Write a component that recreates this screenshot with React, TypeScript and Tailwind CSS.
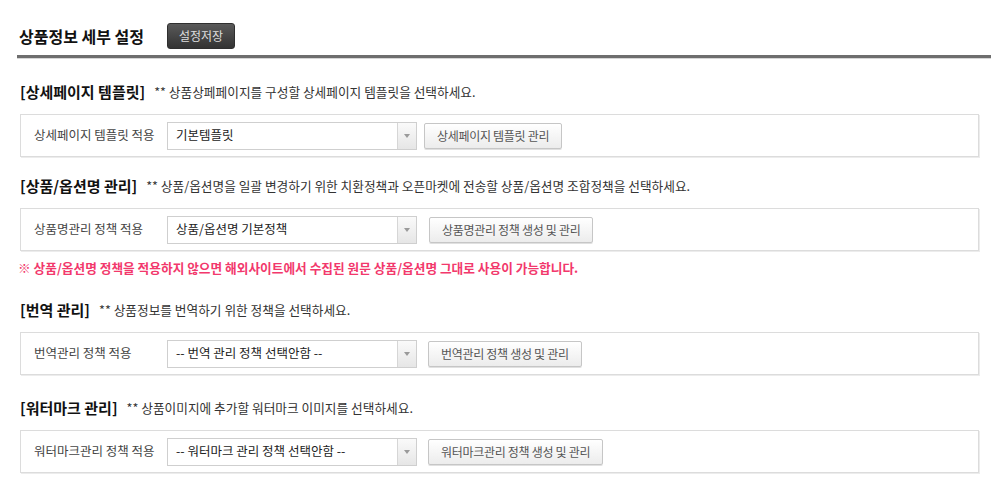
const font = "font-['Noto_Sans_CJK_KR','Noto_Sans',sans-serif]";

type Row = {
  title: string;
  desc: string;
  label: string;
  value: string;
  action: string;
  gap: string;
  top: string;
};

const rows: Row[] = [
  {
    title: "[상세페이지 템플릿]",
    desc: "** 상품상페페이지를 구성할 상세페이지 템플릿을 선택하세요.",
    label: "상세페이지 템플릿 적용",
    value: "기본템플릿",
    action: "상세페이지 템플릿 관리",
    gap: "ml-[7px]",
    top: "mt-[24px]",
  },
  {
    title: "[상품/옵션명 관리]",
    desc: "** 상품/옵션명을 일괄 변경하기 위한 치환정책과 오픈마켓에 전송할 상품/옵션명 조합정책을 선택하세요.",
    label: "상품명관리 정책 적용",
    value: "상품/옵션명 기본정책",
    action: "상품명관리 정책 생성 및 관리",
    gap: "ml-[12px]",
    top: "mt-[19px]",
  },
  {
    title: "[번역 관리]",
    desc: "** 상품정보를 번역하기 위한 정책을 선택하세요.",
    label: "번역관리 정책 적용",
    value: "-- 번역 관리 정책 선택안함 --",
    action: "번역관리 정책 생성 및 관리",
    gap: "ml-[11px]",
    top: "mt-[22px]",
  },
  {
    title: "[워터마크 관리]",
    desc: "** 상품이미지에 추가할 워터마크 이미지를 선택하세요.",
    label: "워터마크관리 정책 적용",
    value: "-- 워터마크 관리 정책 선택안함 --",
    action: "워터마크관리 정책 생성 및 관리",
    gap: "ml-[11px]",
    top: "mt-[23px]",
  },
];

function FakeSelect({ value }: { value: string }) {
  return (
    <div className="flex h-[28px] w-[250px] items-stretch border border-[#cfcfcf] bg-white">
      <div className="flex flex-1 items-center pl-[8px] text-[12.5px] text-[#222]">
        {value}
      </div>
      <div className="flex w-[19px] items-center justify-center border-l border-[#d6d6d6] bg-gradient-to-b from-[#fafafa] to-[#e6e6e6]">
        <span className="block h-0 w-0 border-x-[3px] border-t-[4px] border-x-transparent border-t-[#9a9a9a]" />
      </div>
    </div>
  );
}

function Section({ row, children }: { row: Row; children?: React.ReactNode }) {
  return (
    <div className={row.top}>
      <div className="flex h-[20px] items-center">
        <span className="text-[15px] font-bold text-[#111]">{row.title}</span>
        <span className="ml-[9px] text-[12.7px] text-[#333]">{row.desc}</span>
      </div>
      <div className="mt-[12px] flex h-[43px] items-center border border-[#dcdcdc] pl-[13px] shadow-[1px_1px_0_#ececec]">
        <div className="w-[133px] text-[12.5px] text-[#444]">{row.label}</div>
        <FakeSelect value={row.value} />
        <button
          type="button"
          className={`${row.gap} h-[26px] rounded-[2px] border border-[#c6c6c6] bg-gradient-to-b from-white to-[#ececec] px-[12px] text-[12px] tracking-[-0.3px] text-[#555] shadow-[0_1px_0_#e0e0e0]`}
        >
          {row.action}
        </button>
      </div>
      {children}
    </div>
  );
}

export default function App() {
  return (
    <div className={`${font} h-[504px] w-[991px] overflow-hidden bg-white`}>
      {/* header */}
      <div className="pl-[17px] pt-[23px]">
        <div className="flex h-[26px] items-center pl-[2px]">
          <h1 className="w-[148px] text-[16px] font-bold text-[#111]">상품정보 세부 설정</h1>
          <button
            type="button"
            className="h-[26px] w-[68px] rounded-[3px] border border-[#2f2f2f] bg-gradient-to-b from-[#5a5a5a] to-[#333] text-[12px] text-[#ddd]"
          >
            설정저장
          </button>
        </div>
        <div className="mt-[6px] h-[3px] bg-[#6e6e6e] shadow-[0_1px_0_#d6d6d6]" />
      </div>

      <div className="pl-[20px] pr-[12px]">
        {rows.map((row, i) => (
          <Section key={row.title} row={row}>
            {i === 1 && (
              <p className="-ml-[2px] mt-[7px] flex h-[20px] items-center text-[12.7px] font-bold text-[#f2386c]">
                ※ 상품/옵션명 정책을 적용하지 않으면 해외사이트에서 수집된 원문 상품/옵션명 그대로 사용이 가능합니다.
              </p>
            )}
          </Section>
        ))}
      </div>
    </div>
  );
}
